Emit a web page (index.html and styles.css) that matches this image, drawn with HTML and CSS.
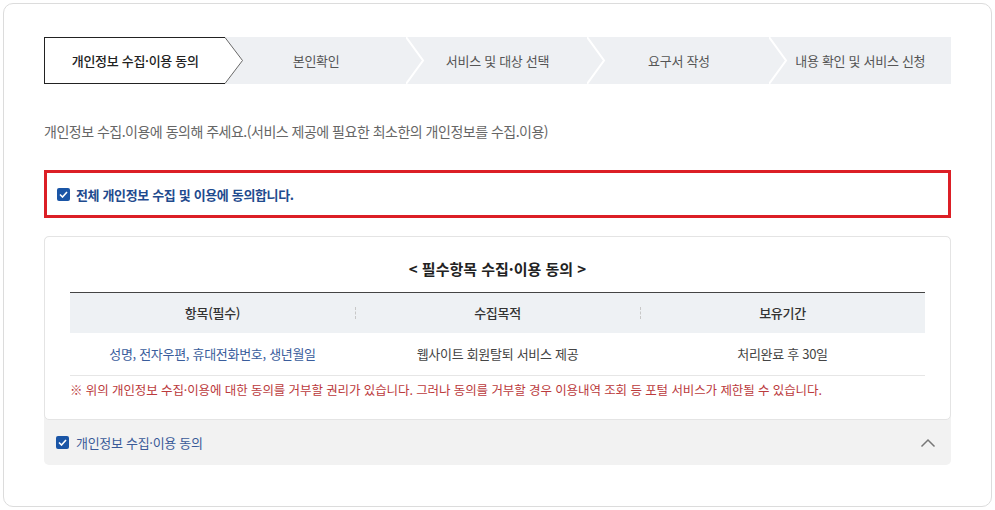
FILE: index.html
```html
<!DOCTYPE html>
<html lang="ko">
<head>
    <meta charset="UTF-8">
    <meta name="viewport" content="width=device-width, initial-scale=1.0">
    <title>개인정보 수집·이용 동의</title>
    <link rel="stylesheet" href="styles.css">
</head>
<body>
    <div class="page">
        <div class="card">
            <!-- 단계 표시 -->
            <ol class="steps">
                <li class="step active">
                    <span>개인정보 수집·이용 동의</span>
                    <svg class="chev" width="19" height="47" viewBox="0 0 19 47">
                        <polygon points="0,0 18,23.5 0,47" fill="#fff"/>
                        <polyline points="0,0.5 17.5,23.5 0,46.5" fill="none" stroke="#666" stroke-width="1"/>
                    </svg>
                </li>
                <li class="step">
                    <span>본인확인</span>
                    <svg class="chev" width="19" height="47" viewBox="0 0 19 47">
                        <polyline points="0,0 17,23.5 0,47" fill="none" stroke="#fff" stroke-width="2"/>
                    </svg>
                </li>
                <li class="step">
                    <span>서비스 및 대상 선택</span>
                    <svg class="chev" width="19" height="47" viewBox="0 0 19 47">
                        <polyline points="0,0 17,23.5 0,47" fill="none" stroke="#fff" stroke-width="2"/>
                    </svg>
                </li>
                <li class="step">
                    <span>요구서 작성</span>
                    <svg class="chev" width="19" height="47" viewBox="0 0 19 47">
                        <polyline points="0,0 17,23.5 0,47" fill="none" stroke="#fff" stroke-width="2"/>
                    </svg>
                </li>
                <li class="step">
                    <span>내용 확인 및 서비스 신청</span>
                </li>
            </ol>

            <p class="intro">개인정보 수집.이용에 동의해 주세요.(서비스 제공에 필요한 최소한의 개인정보를 수집.이용)</p>

            <!-- 전체 동의 -->
            <label class="agree-all">
                <span class="check">
                    <svg width="9" height="7" viewBox="0 0 9 7"><polyline points="1,3.5 3.5,6 8,1" fill="none" stroke="#fff" stroke-width="1.6"/></svg>
                </span>
                전체 개인정보 수집 및 이용에 동의합니다.
            </label>

            <!-- 필수항목 -->
            <div class="consent">
                <div class="consent-box">
                    <h3 class="consent-title">&lt; 필수항목 수집·이용 동의 &gt;</h3>
                    <table class="consent-table">
                        <thead>
                            <tr>
                                <th>항목(필수)</th>
                                <th>수집목적</th>
                                <th>보유기간</th>
                            </tr>
                        </thead>
                        <tbody>
                            <tr>
                                <td class="items">성명, 전자우편, 휴대전화번호, 생년월일</td>
                                <td>웹사이트 회원탈퇴 서비스 제공</td>
                                <td>처리완료 후 30일</td>
                            </tr>
                        </tbody>
                    </table>
                    <p class="notice">※ 위의 개인정보 수집·이용에 대한 동의를 거부할 권리가 있습니다. 그러나 동의를 거부할 경우 이용내역 조회 등 포털 서비스가 제한될 수 있습니다.</p>
                </div>
                <div class="consent-head">
                    <label class="agree-item">
                        <span class="check">
                            <svg width="9" height="7" viewBox="0 0 9 7"><polyline points="1,3.5 3.5,6 8,1" fill="none" stroke="#fff" stroke-width="1.6"/></svg>
                        </span>
                        개인정보 수집·이용 동의
                    </label>
                    <svg class="toggle" width="16" height="10" viewBox="0 0 16 10">
                        <polyline points="1.5,8.5 8,2 14.5,8.5" fill="none" stroke="#777" stroke-width="1.5"/>
                    </svg>
                </div>
            </div>
        </div>
    </div>
</body>
</html>
```

FILE: styles.css
```css
* {
    margin: 0;
    padding: 0;
    box-sizing: border-box;
    font-family: "Noto Sans CJK KR", "Noto Sans", sans-serif;
}

body {
    background-color: #fff;
    color: #333;
    font-size: 14px;
}

.page {
    padding: 3px;
}

.card {
    height: 504px;
    padding: 33px 40px;
    border: 1px solid #dcdcdc;
    border-radius: 10px;
}

/* 단계 */
.steps {
    list-style: none;
    display: grid;
    grid-template-columns: repeat(5, 1fr);
    height: 47px;
    background-color: #eef0f3;
}

.step {
    position: relative;
    display: flex;
    align-items: center;
    justify-content: center;
    font-size: 13px;
    color: #555;
    letter-spacing: -0.3px;
}

.step.active {
    z-index: 2;
    background-color: #fff;
    border: 1px solid #222;
    border-right: none;
    color: #222;
    font-weight: 500;
}

.chev {
    position: absolute;
    top: 0;
    left: calc(100% - 1px);
    z-index: 1;
}

.step.active .chev {
    top: -1px;
    left: 100%;
}

.intro {
    margin-top: 37px;
    font-size: 14px;
    line-height: 20px;
    color: #666;
    letter-spacing: -0.5px;
}

/* 체크박스 */
.check {
    display: inline-flex;
    align-items: center;
    justify-content: center;
    width: 13px;
    height: 13px;
    border-radius: 2px;
    background-color: #1a55a6;
    flex-shrink: 0;
}

.agree-all {
    display: flex;
    align-items: center;
    gap: 6px;
    height: 48px;
    margin-top: 29px;
    padding: 0 10px;
    border: 3px solid #dc1f26;
    font-size: 13px;
    font-weight: 700;
    color: #1f4b8e;
    letter-spacing: -0.35px;
}

.consent {
    margin-top: 18px;
    background-color: #f2f2f2;
    border-radius: 5px;
}

.consent-box {
    padding: 21px 25px 20px;
    background-color: #fff;
    border: 1px solid #e4e4e4;
    border-radius: 5px;
}

.consent-title {
    text-align: center;
    font-size: 15px;
    line-height: 22px;
    font-weight: 700;
    color: #222;
}

.consent-table {
    width: 100%;
    margin-top: 12px;
    border-collapse: collapse;
    table-layout: fixed;
    border-top: 1px solid #444;
    font-size: 13px;
    letter-spacing: -0.3px;
}

.consent-table th {
    position: relative;
    height: 40px;
    background-color: #eef1f4;
    font-weight: 500;
    color: #333;
}

.consent-table th + th::before {
    content: '';
    position: absolute;
    left: 0;
    top: 14px;
    height: 12px;
    border-left: 1px dashed #c8c8c8;
}

.consent-table td {
    height: 43px;
    text-align: center;
    color: #444;
    border-bottom: 1px solid #e6e6e6;
}

.consent-table td.items {
    color: #3a5d9c;
}

.notice {
    margin-top: 5px;
    font-size: 12.5px;
    line-height: 18px;
    color: #bb3a3c;
    letter-spacing: -0.1px;
}

.consent-head {
    display: flex;
    align-items: center;
    justify-content: space-between;
    height: 45px;
    padding: 0 15px 0 12px;
}

.agree-item {
    display: flex;
    align-items: center;
    gap: 7px;
    font-size: 13px;
    color: #3a5a98;
    letter-spacing: -0.3px;
}
```
